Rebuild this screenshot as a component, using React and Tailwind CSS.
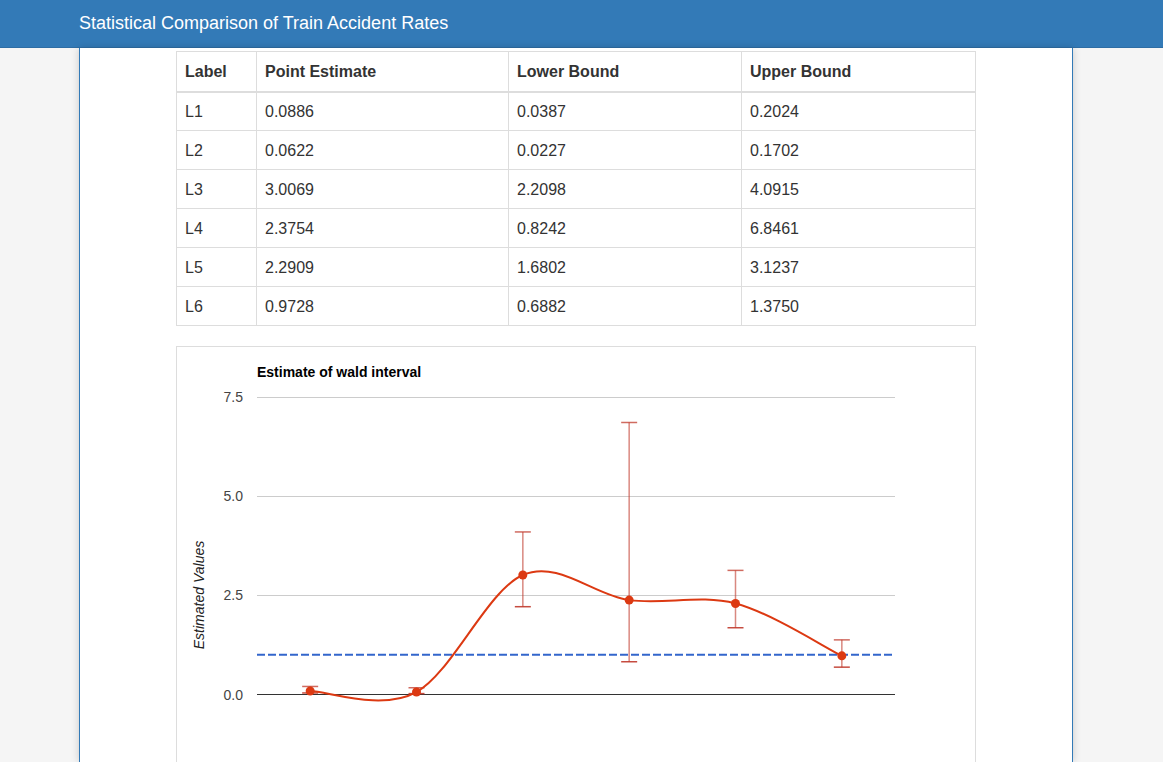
const rows = [
  ["L1", "0.0886", "0.0387", "0.2024"],
  ["L2", "0.0622", "0.0227", "0.1702"],
  ["L3", "3.0069", "2.2098", "4.0915"],
  ["L4", "2.3754", "0.8242", "6.8461"],
  ["L5", "2.2909", "1.6802", "3.1237"],
  ["L6", "0.9728", "0.6882", "1.3750"],
];

// chart geometry in page pixels
const left = 257;
const right = 895;
const zeroY = 694.5;
const perUnit = 99.33 / 2.5;
const yOf = (v) => zeroY - v * perUnit;
const xOf = (i) => left + ((right - left) / rows.length) * (i + 0.5);

function smoothPath(pts) {
  let d = `M${pts[0][0]},${pts[0][1]}`;
  for (let i = 0; i < pts.length - 1; i++) {
    const p0 = pts[i - 1] || pts[i];
    const p1 = pts[i];
    const p2 = pts[i + 1];
    const p3 = pts[i + 2] || p2;
    const c1 = [p1[0] + (p2[0] - p0[0]) / 6, p1[1] + (p2[1] - p0[1]) / 6];
    const c2 = [p2[0] - (p3[0] - p1[0]) / 6, p2[1] - (p3[1] - p1[1]) / 6];
    d += ` C${c1[0]},${c1[1]} ${c2[0]},${c2[1]} ${p2[0]},${p2[1]}`;
  }
  return d;
}

function Chart() {
  const pts = rows.map((r, i) => [xOf(i), yOf(parseFloat(r[1]))]);
  const ticks = [7.5, 5.0, 2.5];
  return (
    <svg width="798" height="420" className="block">
      <g transform="translate(-177,-347)" fontFamily="'Liberation Sans', Arial, sans-serif">
        <text x="257" y="377" fontSize="14" fontWeight="bold" fill="#000">
          Estimate of wald interval
        </text>
        {ticks.map((t) => (
          <g key={t}>
            <line x1={left} x2={right} y1={Math.round(yOf(t)) + 0.5} y2={Math.round(yOf(t)) + 0.5} stroke="#cccccc" strokeWidth="1" />
            <text x="243" y={yOf(t) + 5} fontSize="14" fill="#444" textAnchor="end">
              {t.toFixed(1)}
            </text>
          </g>
        ))}
        <line x1={left} x2={right} y1={zeroY} y2={zeroY} stroke="#333" strokeWidth="1" />
        <text x="243" y={zeroY + 5} fontSize="14" fill="#444" textAnchor="end">
          0.0
        </text>
        <text
          x="0"
          y="0"
          fontSize="14"
          fontStyle="italic"
          fill="#222"
          textAnchor="middle"
          transform="translate(204,595) rotate(-90)"
        >
          Estimated Values
        </text>
        <line
          x1={left}
          x2={right}
          y1={yOf(1)}
          y2={yOf(1)}
          stroke="#3366cc"
          strokeWidth="2"
          strokeDasharray="8 3"
        />
        {rows.map((r, i) => {
          const x = xOf(i);
          const lo = yOf(parseFloat(r[2]));
          const hi = yOf(parseFloat(r[3]));
          return (
            <g key={r[0]} stroke="#c0392b">
              <line x1={x} x2={x} y1={hi} y2={lo} strokeWidth="1.5" strokeOpacity="0.6" />
              <line x1={x - 8} x2={x + 8} y1={hi} y2={hi} strokeWidth="1.5" strokeOpacity="0.75" />
              <line x1={x - 8} x2={x + 8} y1={lo} y2={lo} strokeWidth="1.5" strokeOpacity="0.9" />
            </g>
          );
        })}
        <path d={smoothPath(pts)} fill="none" stroke="#dc3912" strokeWidth="2" />
        {pts.map((p, i) => (
          <circle key={i} cx={p[0]} cy={p[1]} r="4.5" fill="#dc3912" />
        ))}
      </g>
    </svg>
  );
}

export default function App() {
  return (
    <div className="min-h-screen bg-[#f5f5f5] font-['Liberation_Sans',Arial,sans-serif] text-[#333] overflow-hidden">
      <div className="h-[48px] bg-[#337ab7] border-b border-[#2e6da4] flex items-center pl-[79px] pb-[2px]">
        <h1 className="text-white text-[18px] leading-none">Statistical Comparison of Train Accident Rates</h1>
      </div>
      <div className="ml-[79px] w-[994px] h-[714px] bg-white border-x border-[#337ab7] shadow-[0_0_8px_rgba(0,0,0,0.18)] pt-[3px]">
        <table className="mx-auto w-[800px] border-collapse border border-[#ddd] text-[16px]">
          <thead>
            <tr className="h-[40px]">
              <th className="w-[80px] border border-[#ddd] border-b-2 px-2 pt-[2px] text-left font-bold">Label</th>
              <th className="w-[252px] border border-[#ddd] border-b-2 px-2 pt-[2px] text-left font-bold">Point Estimate</th>
              <th className="w-[233px] border border-[#ddd] border-b-2 px-2 pt-[2px] text-left font-bold">Lower Bound</th>
              <th className="border border-[#ddd] border-b-2 px-2 pt-[2px] text-left font-bold">Upper Bound</th>
            </tr>
          </thead>
          <tbody>
            {rows.map((r) => (
              <tr key={r[0]} className="h-[39px]">
                {r.map((c, j) => (
                  <td key={j} className="border border-[#ddd] px-2 pt-[2px]">
                    {c}
                  </td>
                ))}
              </tr>
            ))}
          </tbody>
        </table>
        <div className="mx-auto mt-[20px] w-[800px] h-[500px] border border-[#ddd]">
          <Chart />
        </div>
      </div>
    </div>
  );
}
